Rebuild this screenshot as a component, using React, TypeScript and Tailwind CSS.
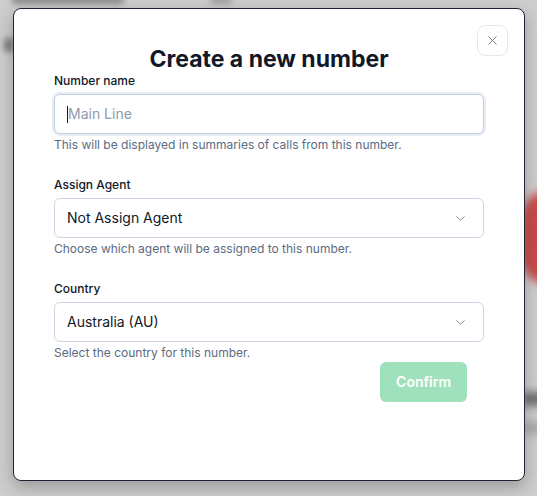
import React from 'react';
import { X, ChevronDown } from 'lucide-react';

const Field: React.FC<{ label: string; help: string; children: React.ReactNode }> = ({ label, help, children }) => (
  <div className="flex flex-col gap-[3px]">
    <label className="text-xs leading-5 font-medium text-[#111827]">{label}</label>
    {children}
    <p className="text-xs leading-4 text-[#5b6b82]">{help}</p>
  </div>
);

const SelectBox: React.FC<{ value: string }> = ({ value }) => (
  <div className="flex h-10 items-center justify-between rounded-md border border-[#cbd5e1] bg-white pl-3 pr-[15px]">
    <span className="text-sm text-[#111827]">{value}</span>
    <ChevronDown className="text-[#7c8594]" size={15} strokeWidth={1.5} />
  </div>
);

export default function App() {
  return (
    <div
      className="relative h-[496px] w-[537px] overflow-hidden bg-[#cdcdcd]"
      style={{ fontFamily: 'Inter, "Noto Sans", sans-serif' }}
    >
      {/* blurred page behind the overlay */}
      <div className="absolute left-[12px] top-[-6px] h-[10px] w-[112px] rounded bg-[#8a8a8a] blur-[3px]" />
      <div className="absolute left-[210px] top-[-6px] h-[10px] w-[22px] rounded bg-[#a0a0a0] blur-[3px]" />
      <div className="absolute left-[4px] top-[38px] h-[14px] w-[10px] rounded bg-[#7a7a7a] blur-[3px]" />
      <div className="absolute left-[520px] top-[190px] h-[95px] w-[60px] rounded-full bg-[#c84a4a] blur-[5px]" />
      <div className="absolute left-[522px] top-[392px] h-[14px] w-[30px] rounded bg-[#6e6e6e] blur-[4px]" />
      <div className="absolute left-[522px] top-[422px] h-[12px] w-[30px] rounded bg-[#a8a8a8] blur-[4px]" />

      <div className="relative ml-[13px] mt-[8px] h-[473px] w-[512px] rounded-lg border border-[#1e2433] bg-white shadow-[0_6px_16px_rgba(0,0,0,0.25)]">
        <button className="absolute right-4 top-4 flex h-[31px] w-[31px] items-center justify-center rounded-lg border border-[#e3e8f0] bg-white text-[#6b7689]">
          <X size={15} strokeWidth={1.5} />
        </button>

        <div className="flex flex-col px-10 pt-[38px]">
          <h2 className="text-center text-[23px] leading-6 font-bold text-[#111827]">Create a new number</h2>

          <div className="flex flex-col gap-[22px]">
            <Field label="Number name" help="This will be displayed in summaries of calls from this number.">
              <div className="flex h-10 items-center rounded-md border border-[#c5d0de] bg-white pl-3 ring-2 ring-[#e6edf7]">
                <span className="h-[17px] w-px bg-[#111827]" />
                <span className="text-sm text-[#8f9bad]">Main Line</span>
              </div>
            </Field>

            <Field label="Assign Agent" help="Choose which agent will be assigned to this number.">
              <SelectBox value="Not Assign Agent" />
            </Field>

            <Field label="Country" help="Select the country for this number.">
              <SelectBox value="Australia (AU)" />
            </Field>
          </div>

          <div className="mt-px flex justify-end pr-[17px]">
            <button className="h-10 rounded-md bg-[#9fe1bd] px-4 text-sm font-semibold text-white">Confirm</button>
          </div>
        </div>
      </div>
    </div>
  );
}
